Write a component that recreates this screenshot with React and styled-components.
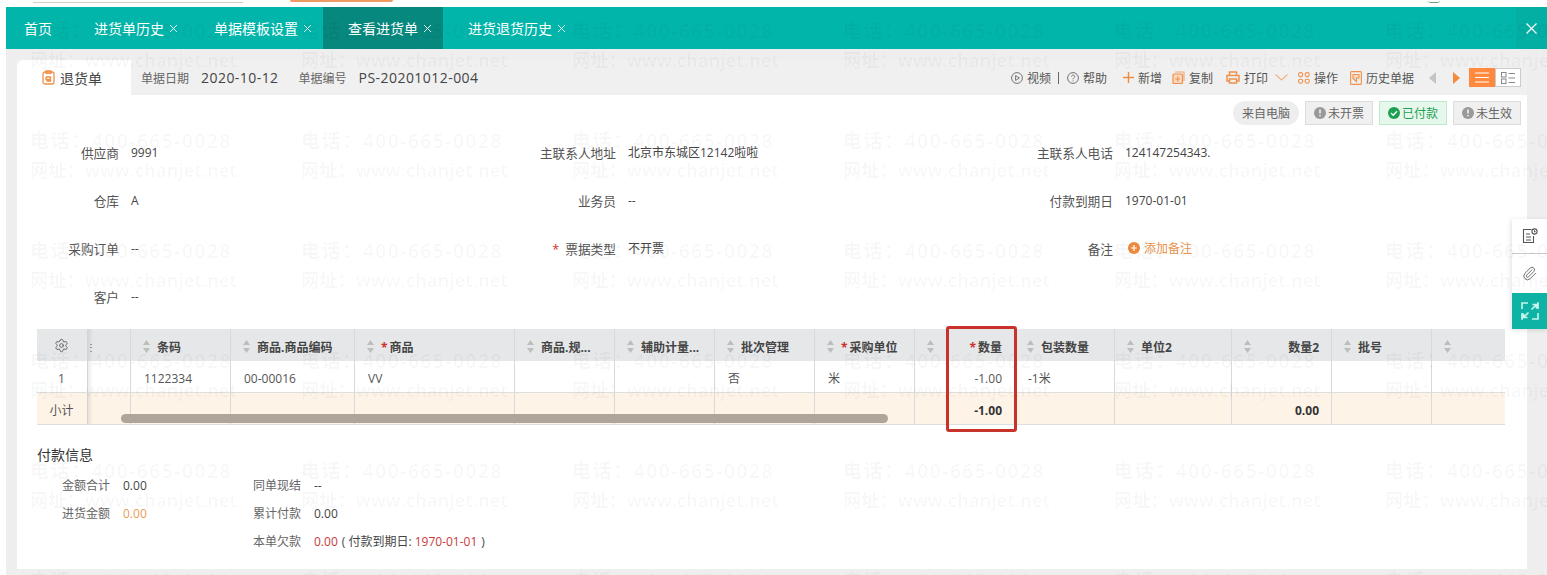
import React from 'react';
import styled, { createGlobalStyle } from 'styled-components';
import { Settings, Paperclip } from 'lucide-react';

const Global = createGlobalStyle`
  html, body { margin: 0; padding: 0; background: #fff; }
  body { font-family: "Open Sans", "Noto Sans CJK SC", sans-serif; font-size: 12px; color: #333; }
`;

const Page = styled.div`
  position: relative;
  width: 1547px;
  height: 575px;
  overflow: hidden;
  background: #fff;
`;

const TopStrip = styled.div`
  height: 7px;
  display: flex;
  align-items: flex-start;
  padding: 0 107px 0 33px;
`;
const SearchLine = styled.div`
  width: 210px;
  height: 1px;
  margin-top: 2px;
  background: #cfcfcf;
`;
const OrangeStub = styled.div`
  width: 103px;
  height: 2px;
  margin-left: 47px;
  background: #ee9a63;
  border-radius: 0 0 3px 3px;
`;
const AvatarStub = styled.div`
  width: 12px;
  height: 2px;
  margin-left: auto;
  border-bottom: 1px solid #6d9c8c;
  border-radius: 0 0 6px 6px;
`;

const Main = styled.div`
  margin-left: 6px;
  height: 568px;
  display: flex;
  flex-direction: column;
  background: #eeeeee;
`;

const TabBar = styled.div`
  height: 42px;
  flex: none;
  display: flex;
  background: #02b5aa;
  color: #fff;
  font-size: 14px;
`;
const Tab = styled.div`
  display: flex;
  align-items: center;
  gap: 5px;
  padding: ${p => (p.$home ? '0 17px 0 18px' : '0 11px 0 25px')};
  background: ${p => (p.$active ? '#06887f' : 'transparent')};
`;
const CloseAll = styled.div`
  margin-left: auto;
  width: 31px;
  display: flex;
  align-items: center;
  justify-content: center;
  background: #03aea3;
`;

const Body = styled.div`
  flex: 1;
  padding: 11px 20px 6px 11px;
  display: flex;
`;
const Card = styled.div`
  flex: 1;
  display: flex;
  flex-direction: column;
  background: #fff;
  border-radius: 6px 0 0 0;
`;

const CardHead = styled.div`
  height: 35px;
  flex: none;
  display: flex;
  align-items: center;
  background: #f0f0f0;
  padding-right: 6px;
`;
const DocTab = styled.div`
  width: 114px;
  height: 100%;
  display: flex;
  align-items: center;
  gap: 5px;
  padding-left: 25px;
  box-sizing: border-box;
  background: #fff;
  border-radius: 6px 0 0 0;
  font-size: 14px;
  color: #444;
`;
const MetaLabel = styled.span`
  margin-left: ${p => p.$left}px;
  font-size: 12px;
  color: #666;
`;
const MetaValue = styled.span`
  margin-left: 12px;
  font-size: 14px;
  letter-spacing: 0.45px;
  color: #444;
`;
const ToolBar = styled.div`
  margin-left: auto;
  display: flex;
  align-items: center;
`;
const Tool = styled.div`
  display: flex;
  align-items: center;
  gap: 4px;
  margin-left: ${p => p.$left || 0}px;
  color: #555;
`;
const ToolDivider = styled.div`
  width: 1px;
  height: 12px;
  margin: 0 8px 0 7px;
  background: #666;
`;
const ViewToggle = styled.div`
  display: flex;
  margin-left: 9px;
`;
const ViewBtn = styled.div`
  width: 26px;
  height: 19px;
  display: flex;
  align-items: center;
  justify-content: center;
  background: ${p => (p.$on ? '#ff8a3d' : '#fff')};
  border: ${p => (p.$on ? 'none' : '1px solid #ccc')};
  box-sizing: border-box;
`;

const StatusRow = styled.div`
  height: 24px;
  margin-top: 6px;
  flex: none;
  display: flex;
  justify-content: flex-end;
  gap: 6px;
  padding-right: 6px;
`;
const SourcePill = styled.div`
  width: 66px;
  display: flex;
  align-items: center;
  justify-content: center;
  background: #eeeeee;
  border-radius: 12px;
  color: #666;
`;
const Status = styled.div`
  width: 68px;
  box-sizing: border-box;
  display: flex;
  align-items: center;
  justify-content: center;
  gap: 2px;
  border: 1px solid ${p => (p.$ok ? '#bfe8cc' : '#dcdcdc')};
  background: ${p => (p.$ok ? '#e6f8ec' : '#f0f0f0')};
  color: ${p => (p.$ok ? '#1ea052' : '#666')};
`;

const Fields = styled.div`
  margin-top: 15px;
  display: grid;
  grid-template-columns: repeat(3, 497px);
  grid-auto-rows: 24px;
  row-gap: 24px;
`;
const Field = styled.div`
  display: flex;
  align-items: center;
  gap: 12px;
`;
const FieldLabel = styled.div`
  width: 102px;
  text-align: right;
  font-size: 12.7px;
  color: #555;
  white-space: nowrap;
`;
const Star = styled.span`
  color: #d0312d;
  margin-right: ${p => p.$gap || 2}px;
`;
const FieldValue = styled.div`
  color: #444;
`;
const AddNote = styled.div`
  display: flex;
  align-items: center;
  gap: 4px;
  margin-left: 3px;
  color: #e8944c;
`;

const TableWrap = styled.div`
  position: relative;
  margin: 21px 0 0 20px;
  width: 1468px;
  flex: none;
`;
const COLS = '51px 43px 100px 124px 160px repeat(6, 100px) 117px 100px 100px 73px';
const Row = styled.div`
  --pt: ${p => p.$pt}px;
  display: grid;
  grid-template-columns: ${COLS};
  height: ${p => p.$h}px;
  box-sizing: border-box;
  background: ${p => p.$bg};
  border-bottom: ${p => (p.$line ? '1px solid #dedede' : 'none')};
`;
const Cell = styled.div`
  display: flex;
  align-items: center;
  justify-content: ${p => (p.$right ? 'flex-end' : 'flex-start')};
  padding: var(--pt) 12px 0 ${p => (p.$head ? 12 : 13)}px;
  border-right: ${p => (p.$last ? 'none' : '1px solid #d9d9d9')};
  box-sizing: border-box;
  min-width: 0;
  white-space: nowrap;
  font-weight: ${p => (p.$bold ? 700 : 400)};
  color: ${p => (p.$bold ? '#333' : '#555')};
`;
const FixedCell = styled.div`
  position: relative;
  display: flex;
  align-items: center;
  justify-content: center;
  padding: var(--pt) 1px 0 0;
  color: #555;
  box-sizing: border-box;
  border-right: 1px solid #d4d4d4;
  &::after {
    content: '';
    position: absolute;
    top: 0;
    bottom: 0;
    right: -6px;
    width: 5px;
    background: linear-gradient(to right, rgba(0, 0, 0, 0.08), rgba(0, 0, 0, 0));
  }
`;
const GearWrap = styled.span`
  display: flex;
  margin-bottom: 3px;
`;
const GripCell = styled.div`
  border-right: 1px solid #d9d9d9;
  display: flex;
  align-items: center;
  padding-top: var(--pt);
  font-size: 10px;
  color: #666;
`;
const Grip = styled.span`
  margin-left: -2px;
`;
const HeadText = styled.span`
  margin-left: ${p => (p.$right ? 'auto' : '7px')};
  font-weight: 700;
  color: #444;
`;
const ScrollThumb = styled.div`
  position: absolute;
  left: 84px;
  top: 85px;
  width: 767px;
  height: 9px;
  border-radius: 5px;
  background: #aea69a;
`;
const Highlight = styled.div`
  position: absolute;
  left: 909px;
  top: -3px;
  width: 71px;
  height: 106px;
  box-sizing: border-box;
  border: 3px solid #c9322b;
  border-radius: 3px;
`;

const PayTitle = styled.div`
  margin: 20px 0 0 20px;
  height: 20px;
  line-height: 20px;
  font-size: 14px;
  color: #333;
`;
const PayGrid = styled.div`
  margin: 10px 0 0 20px;
  display: flex;
`;
const PayCol = styled.div`
  width: ${p => p.$w}px;
  display: flex;
  flex-direction: column;
  gap: 8px;
`;
const PayRow = styled.div`
  height: 20px;
  display: flex;
  align-items: center;
  gap: 13px;
`;
const PayLabel = styled.div`
  width: ${p => p.$w}px;
  text-align: right;
  color: #666;
`;
const PayValue = styled.span`
  color: ${p => p.$c || '#444'};
`;
const DueNote = styled.span`
  margin-left: 4px;
  color: #444;
`;

const SidePanel = styled.div`
  position: absolute;
  right: 0;
  top: 219px;
  width: 35px;
  box-shadow: -1px 1px 5px rgba(0, 0, 0, 0.12);
`;
const SideBtn = styled.div`
  height: ${p => p.$h}px;
  display: flex;
  align-items: center;
  justify-content: center;
  background: ${p => (p.$on ? '#0fb3a6' : '#fff')};
  border-bottom: ${p => (p.$line ? '1px solid #ccc' : 'none')};
  box-sizing: border-box;
`;

const Watermark = styled.div`
  position: absolute;
  inset: 0;
  padding: 17px 0 0 30px;
  display: grid;
  grid-template-columns: repeat(6, 271px);
  grid-auto-rows: 110px;
  overflow: hidden;
  pointer-events: none;
`;
const Mark = styled.div`
  font-weight: 600;
  white-space: nowrap;
  color: rgba(0, 0, 0, 0.04);
`;
const MarkPhone = styled.div`
  font-size: 19px;
  line-height: 29px;
  letter-spacing: 1.6px;
`;
const MarkSite = styled.div`
  font-size: 18px;
  line-height: 29px;
  letter-spacing: 0.3px;
`;

const Close = () => (
  <svg width="9" height="9" viewBox="0 0 9 9" fill="none" stroke="#e6faf8" strokeWidth="1">
    <path d="M1 1l7 7M8 1l-7 7" />
  </svg>
);

const Sort = () => (
  <svg width="7" height="13" viewBox="0 0 7 13" fill="#bdbdbd" style={{ flex: 'none' }}>
    <path d="M3.5 0L7 5H0zM0 8h7l-3.5 5z" />
  </svg>
);

const Ring = ({ children }) => (
  <svg width="12" height="12" viewBox="0 0 12 12" fill="none" stroke="#666" strokeWidth="0.9">
    <circle cx="6" cy="6" r="5.4" />
    {children}
  </svg>
);

const orange = '#f0904a';

const ICONS = {
  doc: (
    <svg width="13" height="15" viewBox="0 0 13 15" fill="none" stroke={orange} strokeWidth="1.3">
      <rect x="1" y="2" width="11" height="12" rx="2" />
      <path d="M4 1h5v2.4H4zM4 7h4.5v4H4.5M4 7v2.5h4.5" />
    </svg>
  ),
  plus: (
    <svg width="11" height="11" viewBox="0 0 11 11" stroke="#f28b3e" strokeWidth="1.4">
      <path d="M5.5 0v11M0 5.5h11" />
    </svg>
  ),
  copy: (
    <svg width="13" height="13" viewBox="0 0 13 13" fill="none" stroke={orange} strokeWidth="1.2">
      <path d="M3 1h9v9" opacity="0.7" />
      <rect x="1" y="3" width="9.5" height="9.5" rx="1" fill="#fbd9bf" />
      <path d="M5.7 5.5v5M3.2 8h5" />
    </svg>
  ),
  print: (
    <svg width="14" height="13" viewBox="0 0 14 13" fill="none" stroke={orange} strokeWidth="1.5">
      <path d="M3.5 4V1h7v3M3.5 10H1V4.5h12V10h-2.5" />
      <rect x="3.5" y="8" width="7" height="4" />
    </svg>
  ),
  ops: (
    <svg width="12" height="12" viewBox="0 0 12 12" fill="none" stroke={orange} strokeWidth="1.1">
      <rect x="0.6" y="0.6" width="4" height="4" rx="1.6" />
      <rect x="7.2" y="0.6" width="4" height="4" rx="1.6" />
      <rect x="0.6" y="7.2" width="4" height="4" rx="1.6" />
      <rect x="7.2" y="7.2" width="4" height="4" rx="1.6" />
    </svg>
  ),
  history: (
    <svg width="12" height="14" viewBox="0 0 12 14" fill="none" stroke={orange} strokeWidth="1.1">
      <rect x="0.6" y="0.6" width="10.8" height="12.8" rx="1" />
      <path d="M3 3.5h6V7H6.5v3.5L3 7.5z" fill="#fbd9bf" />
    </svg>
  ),
};

const head = [
  { t: '条码' },
  { t: '商品.商品编码' },
  { t: '商品', req: 1 },
  { t: '商品.规...' },
  { t: '辅助计量...' },
  { t: '批次管理' },
  { t: '采购单位', req: 1 },
  { t: '数量', req: 1, right: 1 },
  { t: '包装数量' },
  { t: '单位2' },
  { t: '数量2', right: 1 },
  { t: '批号' },
  { t: '' },
];
const row = { 0: '1122334', 1: '00-00016', 2: 'VV', 5: '否', 6: '米', 7: '-1.00', 8: '-1米' };
const total = { 7: '-1.00', 10: '0.00' };

const marks = Array.from({ length: 36 });

const App = () => (
  <Page>
    <Global />
    <TopStrip>
      <SearchLine />
      <OrangeStub />
      <AvatarStub />
    </TopStrip>
    <Main>
      <TabBar>
        <Tab $home>首页</Tab>
        <Tab>进货单历史<Close /></Tab>
        <Tab>单据模板设置<Close /></Tab>
        <Tab $active>查看进货单<Close /></Tab>
        <Tab>进货退货历史<Close /></Tab>
        <CloseAll>
          <svg width="11" height="11" viewBox="0 0 11 11" stroke="#fff" strokeWidth="1.2">
            <path d="M.5.5l10 10M10.5.5l-10 10" />
          </svg>
        </CloseAll>
      </TabBar>
      <Body>
        <Card>
          <CardHead>
            <DocTab>{ICONS.doc}退货单</DocTab>
            <MetaLabel $left={10}>单据日期</MetaLabel>
            <MetaValue>2020-10-12</MetaValue>
            <MetaLabel $left={20}>单据编号</MetaLabel>
            <MetaValue>PS-20201012-004</MetaValue>
            <ToolBar>
              <Tool>
                <Ring><path d="M4.6 3.6v4.8L8.4 6z" /></Ring>
                视频
              </Tool>
              <ToolDivider />
              <Tool>
                <Ring><path d="M4.5 4.6c0-2 3.2-2 3.2 0 0 1.2-1.7 1.3-1.7 2.7M6 8.4v.9" /></Ring>
                帮助
              </Tool>
              <Tool $left={16}>{ICONS.plus}新增</Tool>
              <Tool $left={10}>{ICONS.copy}复制</Tool>
              <Tool $left={13}>{ICONS.print}打印</Tool>
              <Tool $left={7}>
                <svg width="13" height="7" viewBox="0 0 13 7" fill="none" stroke="#f3b184" strokeWidth="1.1">
                  <path d="M.5.5l6 5.5 6-5.5" />
                </svg>
              </Tool>
              <Tool $left={10}>{ICONS.ops}操作</Tool>
              <Tool $left={12}>{ICONS.history}历史单据</Tool>
              <Tool $left={15}>
                <svg width="7" height="12" viewBox="0 0 7 12" fill="#c4c4c4"><path d="M7 0v12L0 6z" /></svg>
              </Tool>
              <Tool $left={17}>
                <svg width="7" height="12" viewBox="0 0 7 12" fill="#f28b3e"><path d="M0 0v12l7-6z" /></svg>
              </Tool>
              <ViewToggle>
                <ViewBtn $on>
                  <svg width="14" height="11" viewBox="0 0 14 11" stroke="#fff" strokeWidth="1.2">
                    <path d="M0 1h14M0 5.5h14M0 10h14" />
                  </svg>
                </ViewBtn>
                <ViewBtn>
                  <svg width="14" height="12" viewBox="0 0 14 12" fill="none" stroke="#888" strokeWidth="1">
                    <rect x=".5" y=".5" width="4.5" height="4.5" />
                    <rect x=".5" y="7" width="4.5" height="4.5" />
                    <path d="M7.5 1.5H14M7.5 6H14M7.5 10.5H14" />
                  </svg>
                </ViewBtn>
              </ViewToggle>
            </ToolBar>
          </CardHead>

          <StatusRow>
            <SourcePill>来自电脑</SourcePill>
            <Status>
              <svg width="12" height="12" viewBox="0 0 12 12"><circle cx="6" cy="6" r="6" fill="#999" /><path d="M6 2.6v4M6 8v1.2" stroke="#fff" strokeWidth="1.4" /></svg>
              未开票
            </Status>
            <Status $ok>
              <svg width="12" height="12" viewBox="0 0 12 12"><circle cx="6" cy="6" r="6" fill="#1ea052" /><path d="M3 6l2.2 2.2L9 4.2" fill="none" stroke="#fff" strokeWidth="1.4" /></svg>
              已付款
            </Status>
            <Status>
              <svg width="12" height="12" viewBox="0 0 12 12"><circle cx="6" cy="6" r="6" fill="#999" /><path d="M6 2.6v4M6 8v1.2" stroke="#fff" strokeWidth="1.4" /></svg>
              未生效
            </Status>
          </StatusRow>

          <Fields>
            <Field><FieldLabel>供应商</FieldLabel><FieldValue>9991</FieldValue></Field>
            <Field><FieldLabel>主联系人地址</FieldLabel><FieldValue>北京市东城区12142啦啦</FieldValue></Field>
            <Field><FieldLabel>主联系人电话</FieldLabel><FieldValue>124147254343.</FieldValue></Field>
            <Field><FieldLabel>仓库</FieldLabel><FieldValue>A</FieldValue></Field>
            <Field><FieldLabel>业务员</FieldLabel><FieldValue>--</FieldValue></Field>
            <Field><FieldLabel>付款到期日</FieldLabel><FieldValue>1970-01-01</FieldValue></Field>
            <Field><FieldLabel>采购订单</FieldLabel><FieldValue>--</FieldValue></Field>
            <Field><FieldLabel><Star $gap={6}>*</Star>票据类型</FieldLabel><FieldValue>不开票</FieldValue></Field>
            <Field>
              <FieldLabel>备注</FieldLabel>
              <AddNote>
                <svg width="12" height="12" viewBox="0 0 12 12"><circle cx="6" cy="6" r="6" fill="#ee8a3c" /><path d="M6 3v6M3 6h6" stroke="#fff" strokeWidth="1.2" /></svg>
                添加备注
              </AddNote>
            </Field>
            <Field><FieldLabel>客户</FieldLabel><FieldValue>--</FieldValue></Field>
          </Fields>

          <TableWrap>
            <Row $h={32} $pt={3} $bg="#e6e7e9">
              <FixedCell>
                <GearWrap><Settings size={15} strokeWidth={1.4} color="#555" /></GearWrap>
              </FixedCell>
              <GripCell><Grip>⋮</Grip></GripCell>
              {head.map((h, i) => (
                <Cell key={i} $head $last={i === head.length - 1}>
                  <Sort />
                  {h.t && (
                    <HeadText $right={h.right}>
                      {h.req && <Star>*</Star>}
                      {h.t}
                    </HeadText>
                  )}
                </Cell>
              ))}
            </Row>
            <Row $h={32} $pt={3} $bg="#fff" $line>
              <FixedCell>1</FixedCell>
              <GripCell />
              {head.map((h, i) => (
                <Cell key={i} $right={h.right} $last={i === head.length - 1}>{row[i]}</Cell>
              ))}
            </Row>
            <Row $h={32} $pt={3} $bg="#fdf3e7" $line>
              <FixedCell>小计</FixedCell>
              <GripCell />
              {head.map((h, i) => (
                <Cell key={i} $right={h.right} $bold $last={i === head.length - 1}>{total[i]}</Cell>
              ))}
            </Row>
            <ScrollThumb />
            <Highlight />
          </TableWrap>

          <PayTitle>付款信息</PayTitle>
          <PayGrid>
            <PayCol $w={216}>
              <PayRow><PayLabel $w={73}>金额合计</PayLabel><PayValue>0.00</PayValue></PayRow>
              <PayRow><PayLabel $w={73}>进货金额</PayLabel><PayValue $c="#ea9a55">0.00</PayValue></PayRow>
            </PayCol>
            <PayCol>
              <PayRow><PayLabel $w={48}>同单现结</PayLabel><PayValue>--</PayValue></PayRow>
              <PayRow><PayLabel $w={48}>累计付款</PayLabel><PayValue>0.00</PayValue></PayRow>
              <PayRow>
                <PayLabel $w={48}>本单欠款</PayLabel>
                <span>
                  <PayValue $c="#c8393b">0.00</PayValue>
                  <DueNote>( 付款到期日: </DueNote>
                  <PayValue $c="#c8393b">1970-01-01</PayValue>
                  <DueNote>)</DueNote>
                </span>
              </PayRow>
            </PayCol>
          </PayGrid>
        </Card>
      </Body>
    </Main>

    <SidePanel>
      <SideBtn $h={35} $line>
        <svg width="16" height="16" viewBox="0 0 16 16" fill="none" stroke="#555" strokeWidth="1.1">
          <path d="M9.5 1.5H1.5v13h10V8M4 6h4M4 9h5M4 12h5" />
          <circle cx="12.5" cy="3.5" r="2.6" />
          <path d="M12.5 2.3v1.3h1" />
        </svg>
      </SideBtn>
      <SideBtn $h={39}>
        <Paperclip size={15} strokeWidth={1.5} color="#666" />
      </SideBtn>
      <SideBtn $h={36} $on>
        <svg width="18" height="18" viewBox="0 0 18 18" fill="none" stroke="#c8f5ef" strokeWidth="1.6">
          <path d="M7 1H1v6M11 17h6v-6M1 11v6h1M17 7V1h-1M10.5 7.5L15 3M11.5 2.5H15.5V6.5M7.5 10.5L3 15M2.5 11.5V15.5H6.5" />
        </svg>
      </SideBtn>
    </SidePanel>

    <Watermark>
      {marks.map((_, i) => (
        <Mark key={i}>
          <MarkPhone>电话：400-665-0028</MarkPhone>
          <MarkSite>网址：www.chanjet.net</MarkSite>
        </Mark>
      ))}
    </Watermark>
  </Page>
);

export default App;
